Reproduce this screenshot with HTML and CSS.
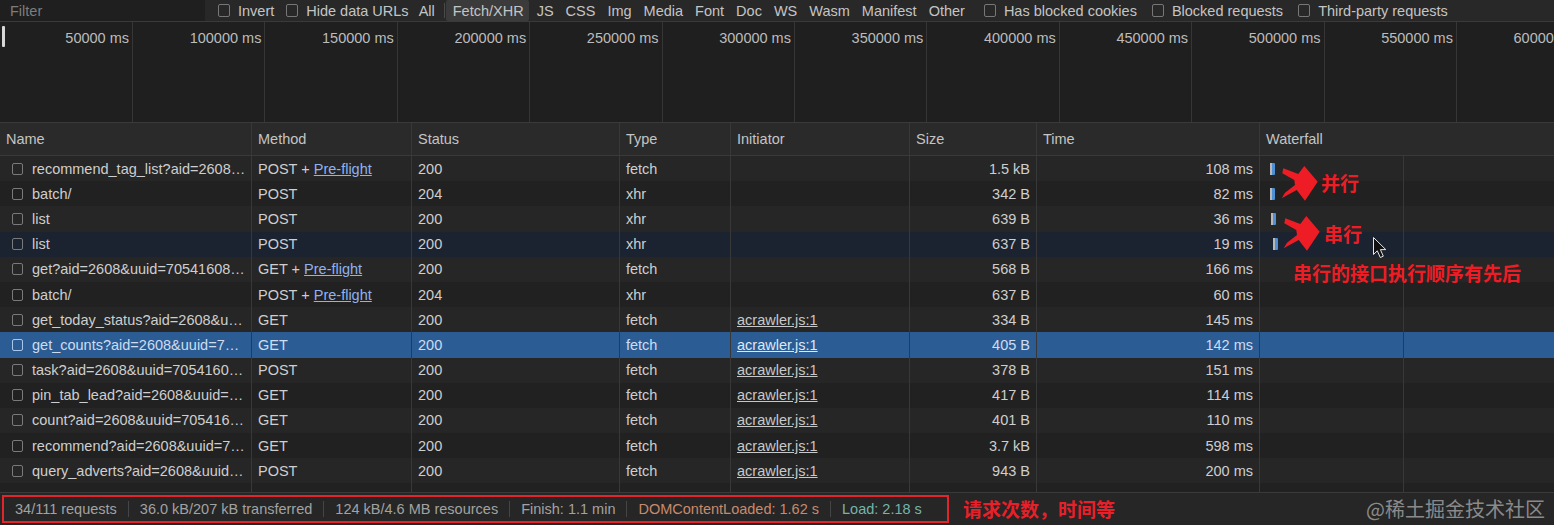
FILE: index.html
```html
<!DOCTYPE html>
<html lang="zh-CN">
<head>
<meta charset="utf-8">
<title>Network</title>
<link rel="stylesheet" href="styles.css">
</head>
<body>
<div class="app">
  <div class="toolbar">
    <div class="filter">Filter</div>
    <label class="cbx first"><span class="box"></span>Invert</label>
    <label class="cbx tight"><span class="box"></span>Hide data URLs</label>
    <span class="tbtn">All</span>
    <span class="tsep"></span>
    <span class="tbtn active">Fetch/XHR</span>
    <span class="tbtn">JS</span>
    <span class="tbtn">CSS</span>
    <span class="tbtn">Img</span>
    <span class="tbtn">Media</span>
    <span class="tbtn">Font</span>
    <span class="tbtn">Doc</span>
    <span class="tbtn">WS</span>
    <span class="tbtn">Wasm</span>
    <span class="tbtn">Manifest</span>
    <span class="tbtn">Other</span>
    <label class="cbx after-types wide"><span class="box"></span>Has blocked cookies</label>
    <label class="cbx wide"><span class="box"></span>Blocked requests</label>
    <label class="cbx"><span class="box"></span>Third-party requests</label>
  </div>

  <div class="overview">
    <div class="tick">50000 ms</div>
    <div class="tick">100000 ms</div>
    <div class="tick">150000 ms</div>
    <div class="tick">200000 ms</div>
    <div class="tick">250000 ms</div>
    <div class="tick">300000 ms</div>
    <div class="tick">350000 ms</div>
    <div class="tick">400000 ms</div>
    <div class="tick">450000 ms</div>
    <div class="tick">500000 ms</div>
    <div class="tick">550000 ms</div>
    <div class="tick">600000 ms</div>
    <span class="handle"></span>
  </div>

  <div class="table">
    <div class="row head">
      <div class="c">Name</div>
      <div class="c">Method</div>
      <div class="c">Status</div>
      <div class="c">Type</div>
      <div class="c">Initiator</div>
      <div class="c">Size</div>
      <div class="c">Time</div>
      <div class="c wfh">Waterfall</div>
    </div>

    <div class="row odd">
      <div class="c name"><span class="rb"></span>recommend_tag_list?aid=2608…</div>
      <div class="c">POST +&nbsp;<span class="link">Pre-flight</span></div>
      <div class="c">200</div>
      <div class="c">fetch</div>
      <div class="c"></div>
      <div class="c r">1.5 kB</div>
      <div class="c r">108 ms</div>
      <div class="c wf"><span class="bar" style="margin-left:4px"><i class="w"></i><i class="d"></i></span></div>
    </div>
    <div class="row">
      <div class="c name"><span class="rb"></span>batch/</div>
      <div class="c">POST</div>
      <div class="c">204</div>
      <div class="c">xhr</div>
      <div class="c"></div>
      <div class="c r">342 B</div>
      <div class="c r">82 ms</div>
      <div class="c wf"><span class="bar" style="margin-left:4px"><i class="w"></i><i class="d"></i></span></div>
    </div>
    <div class="row odd">
      <div class="c name"><span class="rb"></span>list</div>
      <div class="c">POST</div>
      <div class="c">200</div>
      <div class="c">xhr</div>
      <div class="c"></div>
      <div class="c r">639 B</div>
      <div class="c r">36 ms</div>
      <div class="c wf"><span class="bar" style="margin-left:5px"><i class="w"></i><i class="d"></i></span></div>
    </div>
    <div class="row hover">
      <div class="c name"><span class="rb"></span>list</div>
      <div class="c">POST</div>
      <div class="c">200</div>
      <div class="c">xhr</div>
      <div class="c"></div>
      <div class="c r">637 B</div>
      <div class="c r">19 ms</div>
      <div class="c wf"><span class="bar" style="margin-left:7px"><i class="w"></i><i class="d"></i></span></div>
    </div>
    <div class="row odd">
      <div class="c name"><span class="rb"></span>get?aid=2608&amp;uuid=70541608…</div>
      <div class="c">GET +&nbsp;<span class="link">Pre-flight</span></div>
      <div class="c">200</div>
      <div class="c">fetch</div>
      <div class="c"></div>
      <div class="c r">568 B</div>
      <div class="c r">166 ms</div>
      <div class="c wf"></div>
    </div>
    <div class="row">
      <div class="c name"><span class="rb"></span>batch/</div>
      <div class="c">POST +&nbsp;<span class="link">Pre-flight</span></div>
      <div class="c">204</div>
      <div class="c">xhr</div>
      <div class="c"></div>
      <div class="c r">637 B</div>
      <div class="c r">60 ms</div>
      <div class="c wf"></div>
    </div>
    <div class="row odd">
      <div class="c name"><span class="rb"></span>get_today_status?aid=2608&amp;u…</div>
      <div class="c">GET</div>
      <div class="c">200</div>
      <div class="c">fetch</div>
      <div class="c"><span class="init">acrawler.js:1</span></div>
      <div class="c r">334 B</div>
      <div class="c r">145 ms</div>
      <div class="c wf"></div>
    </div>
    <div class="row selected">
      <div class="c name"><span class="rb"></span>get_counts?aid=2608&amp;uuid=7…</div>
      <div class="c">GET</div>
      <div class="c">200</div>
      <div class="c">fetch</div>
      <div class="c"><span class="init">acrawler.js:1</span></div>
      <div class="c r">405 B</div>
      <div class="c r">142 ms</div>
      <div class="c wf"></div>
    </div>
    <div class="row odd">
      <div class="c name"><span class="rb"></span>task?aid=2608&amp;uuid=7054160…</div>
      <div class="c">POST</div>
      <div class="c">200</div>
      <div class="c">fetch</div>
      <div class="c"><span class="init">acrawler.js:1</span></div>
      <div class="c r">378 B</div>
      <div class="c r">151 ms</div>
      <div class="c wf"></div>
    </div>
    <div class="row">
      <div class="c name"><span class="rb"></span>pin_tab_lead?aid=2608&amp;uuid=…</div>
      <div class="c">GET</div>
      <div class="c">200</div>
      <div class="c">fetch</div>
      <div class="c"><span class="init">acrawler.js:1</span></div>
      <div class="c r">417 B</div>
      <div class="c r">114 ms</div>
      <div class="c wf"></div>
    </div>
    <div class="row odd">
      <div class="c name"><span class="rb"></span>count?aid=2608&amp;uuid=705416…</div>
      <div class="c">GET</div>
      <div class="c">200</div>
      <div class="c">fetch</div>
      <div class="c"><span class="init">acrawler.js:1</span></div>
      <div class="c r">401 B</div>
      <div class="c r">110 ms</div>
      <div class="c wf"></div>
    </div>
    <div class="row">
      <div class="c name"><span class="rb"></span>recommend?aid=2608&amp;uuid=7…</div>
      <div class="c">GET</div>
      <div class="c">200</div>
      <div class="c">fetch</div>
      <div class="c"><span class="init">acrawler.js:1</span></div>
      <div class="c r">3.7 kB</div>
      <div class="c r">598 ms</div>
      <div class="c wf"></div>
    </div>
    <div class="row odd">
      <div class="c name"><span class="rb"></span>query_adverts?aid=2608&amp;uuid…</div>
      <div class="c">POST</div>
      <div class="c">200</div>
      <div class="c">fetch</div>
      <div class="c"><span class="init">acrawler.js:1</span></div>
      <div class="c r">943 B</div>
      <div class="c r">200 ms</div>
      <div class="c wf"></div>
    </div>
    <div class="row filler">
      <div class="c"></div><div class="c"></div><div class="c"></div><div class="c"></div>
      <div class="c"></div><div class="c"></div><div class="c"></div><div class="c wf"></div>
    </div>
  </div>

  <div class="status">
    <div class="summary">
      <span class="si">34/111 requests</span>
      <span class="si">36.0 kB/207 kB transferred</span>
      <span class="si">124 kB/4.6 MB resources</span>
      <span class="si">Finish: 1.1 min</span>
      <span class="si dcl">DOMContentLoaded: 1.62 s</span>
      <span class="si load">Load: 2.18 s</span>
    </div>
    <span class="redtext">请求次数，时间等</span>
    <span class="watermark">@稀土掘金技术社区</span>
  </div>

  <svg class="marks" width="1554" height="525" viewBox="0 0 1554 525">
    <path class="arrow" d="M1283.3 168.3 L1298.3 174 L1304.3 166 L1317.7 181.7 L1305 200.7 L1296.7 190 L1281.7 198.3 L1285 192.7 L1295 185 L1294.3 180 L1282.3 173.3 Z"/>
    <path class="arrow" d="M1285.3 218.3 L1300.3 224 L1306.3 216 L1319.7 231.7 L1307 250.7 L1298.7 240 L1283.7 248.3 L1287 242.7 L1297 235 L1296.3 230 L1284.3 223.3 Z"/>
    <path class="cursor" d="M1373.5 237.5 L1373.5 254.5 L1377.3 250.8 L1380.3 257.5 L1383.3 256.2 L1380.4 249.6 L1385.8 249.6 Z"/>
  </svg>
  <span class="note n1">并行</span>
  <span class="note n2">串行</span>
  <span class="note n3">串行的接口执行顺序有先后</span>
</div>
</body>
</html>
```

FILE: styles.css
```css
* {
  box-sizing: border-box;
  margin: 0;
  padding: 0;
}

html, body {
  width: 1554px;
  height: 525px;
  overflow: hidden;
  background: #212121;
}

body {
  font-family: "Liberation Sans", Arial, sans-serif;
  font-size: 14.5px;
  color: #cecece;
}

.app {
  position: relative;
  width: 1554px;
  height: 525px;
  display: flex;
  flex-direction: column;
}

/* ---------- toolbar ---------- */
.toolbar {
  height: 21px;
  flex: none;
  display: flex;
  align-items: center;
  background: #282828;
  color: #c4c4c4;
  white-space: nowrap;
}

.filter {
  width: 205px;
  height: 100%;
  background: #1f1f1f;
  color: #7c7c7c;
  padding-left: 10px;
  display: flex;
  align-items: center;
}

.cbx {
  display: flex;
  align-items: center;
  gap: 8px;
  margin-right: 12px;
}

.cbx.first { margin-left: 13px; }
.cbx.tight { margin-right: 4px; }
.cbx.after-types { margin-left: 13px; }
.cbx.wide { margin-right: 15px; }

.box {
  width: 12px;
  height: 13px;
  border: 1px solid #777;
  border-radius: 2px;
}

.tbtn {
  height: 21px;
  padding: 0 6px;
  display: flex;
  align-items: center;
}

.tbtn.active {
  background: #3b3b3b;
  border-radius: 2px;
  padding: 0 5px 0 7px;
  margin-right: 2px;
}

.tsep {
  width: 1px;
  height: 15px;
  background: #4a4a4a;
  margin: 0 1px 0 3px;
}

/* ---------- overview ---------- */
.overview {
  position: relative;
  height: 101px;
  flex: none;
  border-top: 1px solid #3a3a3a;
  background: #1f1f1f;
  display: grid;
  grid-template-columns: 133px repeat(11, 132.4px);
  overflow: hidden;
}

.tick {
  border-right: 1px solid #363636;
  text-align: right;
  padding: 8px 3px 0 0;
  color: #bcbcbc;
  white-space: nowrap;
}

.handle {
  position: absolute;
  left: 2px;
  top: 4px;
  width: 3px;
  height: 21px;
  background: #d8d8d8;
  border-radius: 1px;
}

/* ---------- table ---------- */
.table {
  flex: 1;
  display: flex;
  flex-direction: column;
  overflow: hidden;
}

.row {
  display: grid;
  grid-template-columns: 252px 160px 208px 111px 179px 127px 223px 1fr;
  height: 25.2px;
  flex: none;
  background: #212121;
}

.row.odd { background: #262626; }
.row.hover { background: #1b2331; }
.row.selected { background: #2c5c94; color: #cddcf0; }

.row.head {
  height: 34px;
  background: #2a2a2a;
  border-top: 1px solid #3a3a3a;
  border-bottom: 1px solid #3a3a3a;
  color: #c4c4c4;
}

.row.filler {
  flex: 1;
  height: auto;
  background: #212121;
}

.c {
  display: flex;
  align-items: center;
  padding: 0 6px;
  border-right: 1px solid #383838;
  white-space: nowrap;
  overflow: hidden;
}

.c:last-child { border-right: none; }

.c.r { justify-content: flex-end; }

.c.name {
  padding-left: 12px;
  gap: 9px;
}

.rb {
  flex: none;
  width: 11px;
  height: 12px;
  border: 1px solid #7a7a7a;
  border-radius: 2px;
}

.selected .rb { border-color: #a9c6ec; }

.link {
  color: #8fb2ee;
  text-decoration: underline;
}

.init {
  text-decoration: underline;
  color: #c8c8c8;
}

.selected .init { color: #dfe8f5; }

.wf {
  background-image: linear-gradient(#383838, #383838);
  background-size: 1px 100%;
  background-position: 143px 0;
  background-repeat: no-repeat;
}

.bar {
  display: flex;
  height: 12px;
}

.bar .w {
  width: 2px;
  background: #b8b8b8;
}

.bar .d {
  width: 3px;
  background: #4f8fd4;
  border-radius: 0 1px 1px 0;
}

/* ---------- status bar ---------- */
.status {
  height: 33px;
  flex: none;
  border-top: 1px solid #3a3a3a;
  background: #262626;
  display: flex;
  align-items: center;
  color: #a2a2a2;
  white-space: nowrap;
}

.summary {
  margin-left: 2px;
  height: 28px;
  width: 947px;
  border: 2px solid #e0262c;
  display: flex;
  align-items: center;
  padding-left: 1px;
}

.si {
  padding: 0 11px;
  border-left: 1px solid #454545;
  line-height: 16px;
}

.si:first-child { border-left: none; padding-left: 10px; }
.si.dcl { color: #c98a6c; }
.si.load { color: #74b5aa; }

.redtext {
  margin-left: 14px;
  font-family: "Noto Sans CJK SC", sans-serif;
  font-weight: 700;
  font-size: 19px;
  color: #e8202a;
  line-height: 20px;
}

.watermark {
  margin-left: auto;
  margin-right: 9px;
  font-family: "Noto Sans CJK SC", sans-serif;
  font-size: 20px;
  color: #8a8a8a;
  line-height: 20px;
}

/* ---------- annotations ---------- */
.marks {
  position: absolute;
  left: 0;
  top: 0;
  pointer-events: none;
}

.arrow { fill: #ee1c24; }

.cursor {
  fill: #111;
  stroke: #e6e6e6;
  stroke-width: 1;
}

.note {
  position: absolute;
  font-family: "Noto Sans CJK SC", sans-serif;
  font-weight: 700;
  font-size: 19px;
  line-height: 20px;
  color: #ee1c24;
  white-space: nowrap;
}

.n1 { left: 1321px; top: 173px; }
.n2 { left: 1324px; top: 224px; }
.n3 { left: 1293px; top: 263px; }
```
